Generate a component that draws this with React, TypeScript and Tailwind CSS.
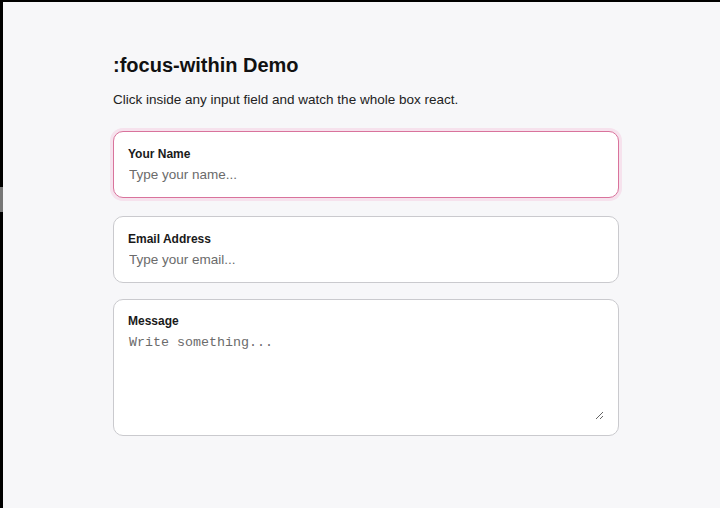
import React from "react";

export default function App() {
  return (
    <div className="w-[720px] h-[508px] bg-black pl-[3px] pt-[2px] overflow-hidden" style={{ fontFamily: '"Liberation Sans", Arial, sans-serif' }}>
      <div className="relative w-full h-full bg-[#f7f7f9]">
        <div className="absolute left-[-3px] top-[185px] w-[3px] h-[25px] bg-[#777]" />
        <div className="pl-[110px] pt-[51px] w-[616px]">
          <h1 className="text-[20px] leading-[24px] font-bold text-[#111]">:focus-within Demo</h1>
          <p className="mt-[15px] text-[13.5px] leading-[16px] text-[#222]">Click inside any input field and watch the whole box react.</p>
          <div className="mt-[23px] flex flex-col">
            <div className="rounded-[10px] bg-white border-[1.5px] border-[#d9739c] shadow-[0_0_0_3px_rgba(236,72,153,0.12)] px-[14px] pt-[15px] pb-[12px] flex flex-col">
              <label className="text-[12px] leading-[15px] font-bold text-[#1a1a1a]">Your Name</label>
              <input className="mt-[3px] h-[20px] px-[1px] text-[13.5px] text-[#222] placeholder:text-[#6b6b6b] outline-none bg-transparent" placeholder="Type your name..." style={{ fontFamily: '"Liberation Sans", Arial, sans-serif' }} />
            </div>
            <div className="mt-[18px] rounded-[10px] bg-white border-[1.5px] border-[#cacace] px-[14px] pt-[15px] pb-[12px] flex flex-col">
              <label className="text-[12px] leading-[15px] font-bold text-[#1a1a1a]">Email Address</label>
              <input className="mt-[3px] h-[20px] px-[1px] text-[13.5px] text-[#222] placeholder:text-[#6b6b6b] outline-none bg-transparent" placeholder="Type your email..." style={{ fontFamily: '"Liberation Sans", Arial, sans-serif' }} />
            </div>
            <div className="mt-[16px] rounded-[10px] bg-white border-[1.5px] border-[#cacace] px-[14px] pt-[14px] pb-[15px] flex flex-col">
              <label className="text-[12px] leading-[15px] font-bold text-[#1a1a1a]">Message</label>
              <textarea className="mt-[6px] h-[85px] px-[1px] text-[13.333px] leading-[16px] text-[#222] placeholder:text-[#6b6b6b] outline-none bg-transparent" placeholder="Write something..." style={{ fontFamily: '"Liberation Mono", "Courier New", monospace' }} />
            </div>
          </div>
        </div>
      </div>
    </div>
  );
}
